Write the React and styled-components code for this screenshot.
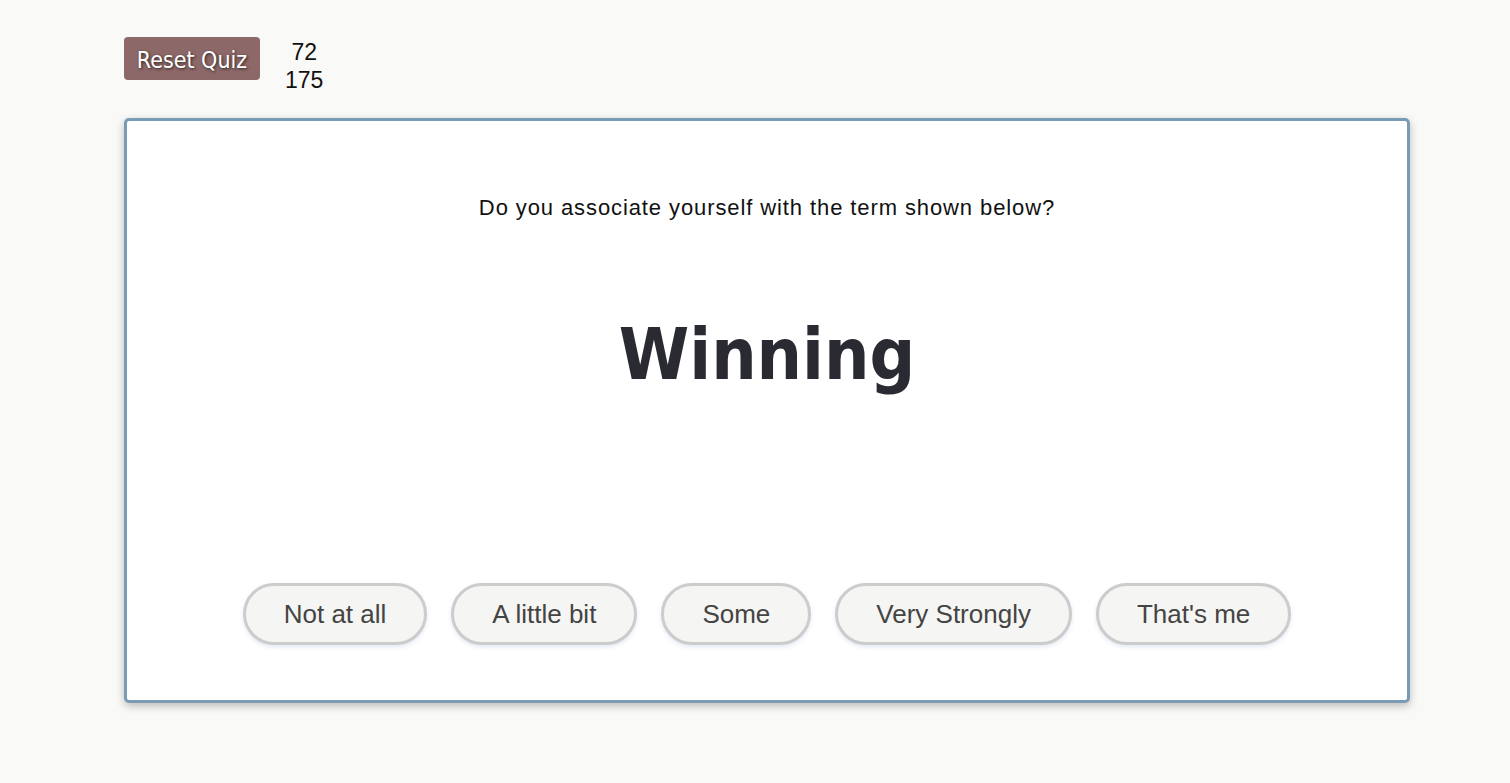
import styled, { createGlobalStyle } from 'styled-components';

const GlobalStyle = createGlobalStyle`
    body {
        margin: 0;
        background: #f9f9f7;
        font-family: 'Liberation Sans', Arial, sans-serif;
    }
`;

const Page = styled.div`
    padding: 37px 100px 60px 124px;
`;

const TopBar = styled.div`
    display: flex;
    align-items: flex-start;
`;

const ResetButton = styled.button`
    width: 136px;
    height: 43px;
    border: none;
    border-radius: 4px;
    background: #8d6868;
    color: #ffffff;
    font-family: 'DejaVu Sans Condensed', 'DejaVu Sans', sans-serif;
    font-size: 23px;
    text-shadow: 1px 1px 3px rgba(0,0,0,0.7);
    padding: 2px 0 0;
    cursor: pointer;
`;

const Counter = styled.div`
    margin-left: 25px;
    margin-top: 1px;
    text-align: center;
    font-size: 23px;
    line-height: 28px;
    color: #111;
`;

const Card = styled.div`
    margin-top: 24px;
    height: 585px;
    box-sizing: border-box;
    background: #ffffff;
    border: 3px solid #7b9bb5;
    border-radius: 5px;
    box-shadow: 0 3px 8px rgba(0,0,0,0.25);
    display: flex;
    flex-direction: column;
    align-items: center;
    padding: 75px 0 55px;
`;

const Question = styled.div`
    font-size: 22px;
    line-height: 24px;
    letter-spacing: 0.9px;
    color: #111;
`;

const Term = styled.div`
    margin-top: 99px;
    font-family: 'DejaVu Sans Condensed', 'DejaVu Sans', sans-serif;
    font-weight: bold;
    font-size: 71px;
    line-height: 1;
    color: #2a2a33;
`;

const Answers = styled.div`
    margin-top: auto;
    display: flex;
    gap: 24px;
`;

const Answer = styled.button`
    height: 62px;
    padding: 0 38px;
    border: 3px solid #cccccc;
    border-radius: 31px;
    background: #f5f5f3;
    color: #444444;
    font-family: 'Liberation Sans', Arial, sans-serif;
    font-size: 26px;
    box-shadow: 0 2px 4px rgba(120,140,200,0.2);
    cursor: pointer;
`;

const answers = ['Not at all', 'A little bit', 'Some', 'Very Strongly', "That's me"];

const App = () => {
    return (
        <Page>
            <GlobalStyle />
            <TopBar>
                <ResetButton>Reset Quiz</ResetButton>
                <Counter>
                    <div>72</div>
                    <div>175</div>
                </Counter>
            </TopBar>
            <Card>
                <Question>Do you associate yourself with the term shown below?</Question>
                <Term>Winning</Term>
                <Answers>
                    {answers.map((a) => (
                        <Answer key={a}>{a}</Answer>
                    ))}
                </Answers>
            </Card>
        </Page>
    );
};

export default App
